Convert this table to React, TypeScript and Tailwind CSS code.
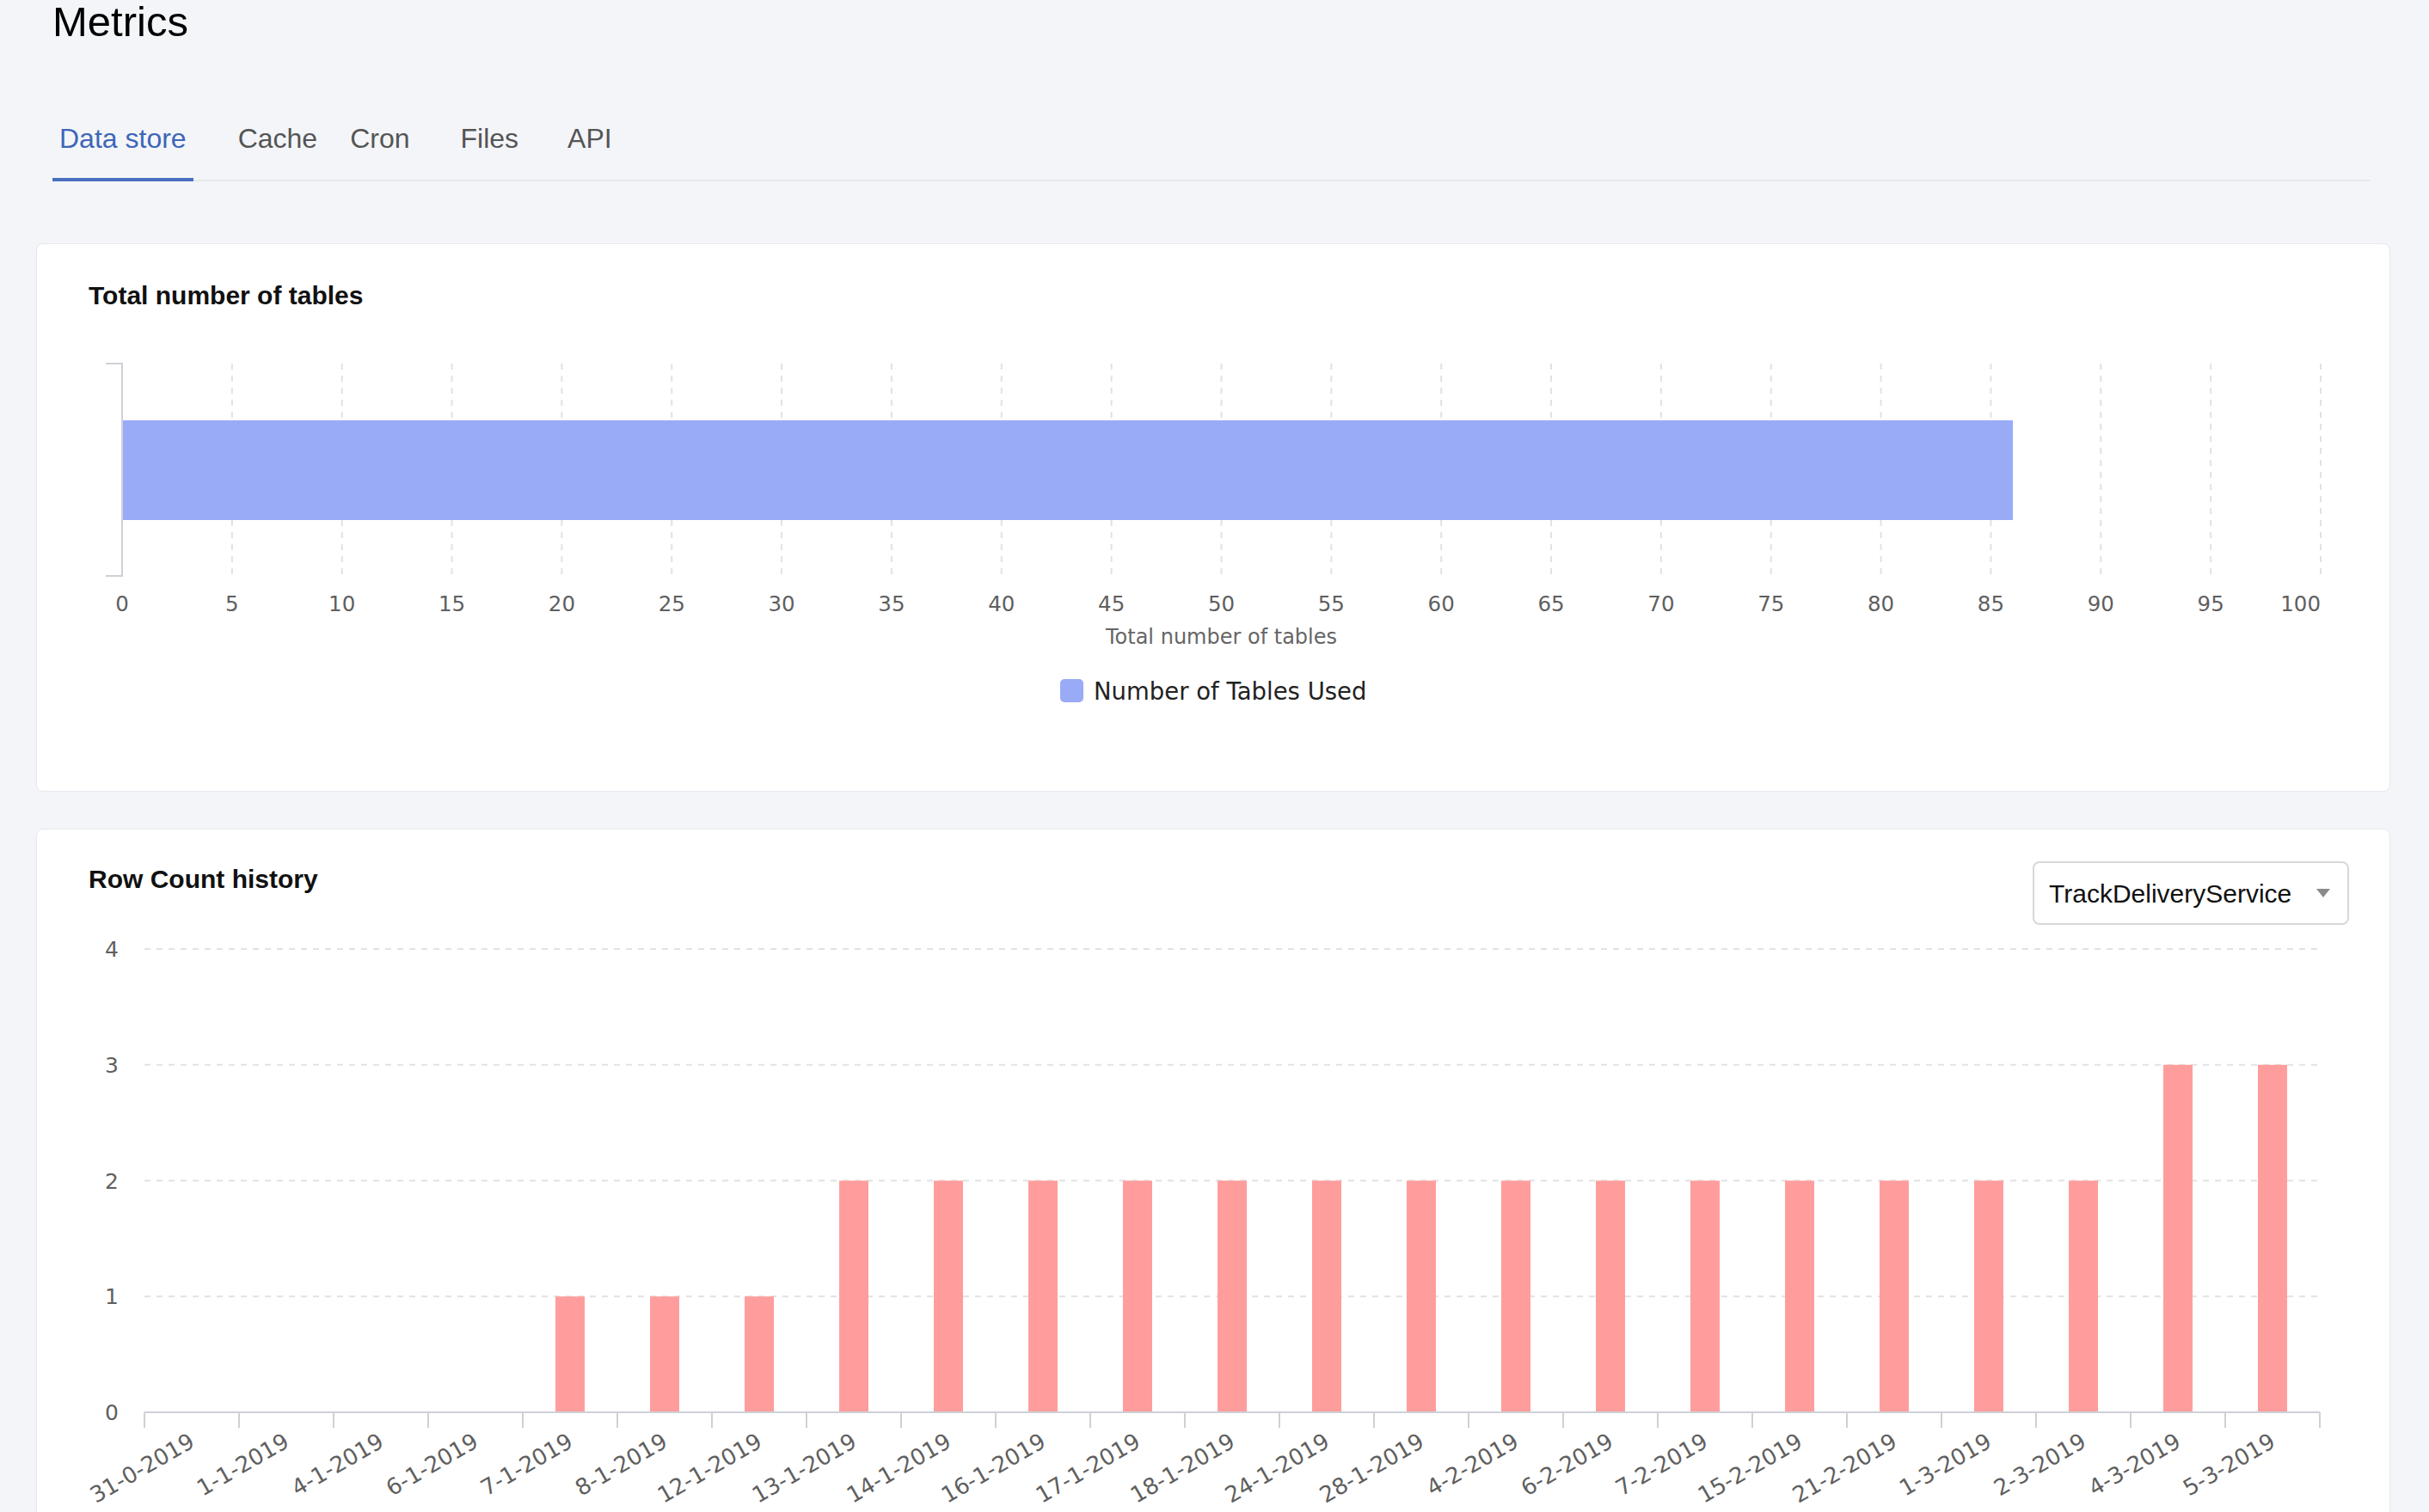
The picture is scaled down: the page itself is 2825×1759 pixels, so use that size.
import React from "react";

const tabs = [
  { label: "Data store", active: true, cls: "" },
  { label: "Cache", active: false, cls: "ml-[44px]" },
  { label: "Cron", active: false, cls: "ml-[22px]" },
  { label: "Files", active: false, cls: "ml-[43px]" },
  { label: "API", active: false, cls: "ml-[41px]" },
];

const rowCounts: [string, number][] = [
  ["31-0-2019", 0],
  ["1-1-2019", 0],
  ["4-1-2019", 0],
  ["6-1-2019", 0],
  ["7-1-2019", 1],
  ["8-1-2019", 1],
  ["12-1-2019", 1],
  ["13-1-2019", 2],
  ["14-1-2019", 2],
  ["16-1-2019", 2],
  ["17-1-2019", 2],
  ["18-1-2019", 2],
  ["24-1-2019", 2],
  ["28-1-2019", 2],
  ["4-2-2019", 2],
  ["6-2-2019", 2],
  ["7-2-2019", 2],
  ["15-2-2019", 2],
  ["21-2-2019", 2],
  ["1-3-2019", 2],
  ["2-3-2019", 2],
  ["4-3-2019", 3],
  ["5-3-2019", 3],
];

const CHART_FONT = "'DejaVu Sans', sans-serif";

const TablesChart = () => {
  const x0 = 99;
  const unit = 25.57;
  const top = 43;
  const bottom = 290;
  const ticks = Array.from({ length: 21 }, (_, i) => i * 5);

  return (
    <svg width="100%" height="540" viewBox="0 0 2736 540" className="block">
      {ticks.slice(1).map((t) => (
        <line
          key={t}
          x1={x0 + t * unit}
          x2={x0 + t * unit}
          y1={top}
          y2={bottom}
          stroke="#e2e2e2"
          strokeWidth="2"
          strokeDasharray="7 7"
        />
      ))}
      <rect x={x0} y={109} width={86 * unit} height={116} fill="#99abf7" />
      {/* y axis */}
      <path
        d={`M${x0 - 19} ${top} H${x0} V${bottom} H${x0 - 19}`}
        fill="none"
        stroke="#cdd1d6"
        strokeWidth="2"
      />
      {ticks.map((t) => (
        <text
          key={t}
          x={x0 + t * unit}
          y={331}
          textAnchor={t === 100 ? "end" : "middle"}
          fontFamily={CHART_FONT}
          fontSize="24.5"
          fill="#5f5f5f"
        >
          {t}
        </text>
      ))}
      <text
        x={x0 + 50 * unit}
        y={369}
        textAnchor="middle"
        fontFamily={CHART_FONT}
        fontSize="24"
        fill="#666"
      >
        Total number of tables
      </text>
      <rect x={1190} y={410} width={27} height={27} rx={5} fill="#99abf7" />
      <text x={1229} y={434} fontFamily={CHART_FONT} fontSize="27.5" fill="#222">
        Number of Tables Used
      </text>
    </svg>
  );
};

const RowCountChart = () => {
  const x0 = 125;
  const x1 = 2655;
  const cat = (x1 - x0) / rowCounts.length;
  const base = 567;
  const unit = 134.75;

  return (
    <svg width="100%" height="720" viewBox="0 0 2736 720" className="block">
      {[1, 2, 3, 4].map((v) => (
        <line
          key={v}
          x1={x0}
          x2={x1}
          y1={base - v * unit}
          y2={base - v * unit}
          stroke="#e2e2e2"
          strokeWidth="2"
          strokeDasharray="7 7"
        />
      ))}
      {[0, 1, 2, 3, 4].map((v) => (
        <text
          key={v}
          x={95}
          y={base - v * unit + 9}
          textAnchor="end"
          fontFamily={CHART_FONT}
          fontSize="25"
          fill="#5f5f5f"
        >
          {v}
        </text>
      ))}
      {rowCounts.map(([label, v], i) => {
        const cx = x0 + (i + 0.5) * cat;
        return (
          <g key={label}>
            {v > 0 && (
              <rect x={cx - 17} y={base - v * unit} width={34} height={v * unit} fill="#ff9d9d" />
            )}
            <text
              x={cx + 5}
              y={606}
              textAnchor="end"
              transform={`rotate(-30 ${cx + 5} 606)`}
              fontFamily={CHART_FONT}
              fontSize="26"
              fill="#5f5f5f"
            >
              {label}
            </text>
          </g>
        );
      })}
      <line x1={x0} x2={x1} y1={base} y2={base} stroke="#cdd1d6" strokeWidth="2" />
      {Array.from({ length: rowCounts.length + 1 }, (_, i) => (
        <line
          key={i}
          x1={x0 + i * cat}
          x2={x0 + i * cat}
          y1={base}
          y2={base + 18}
          stroke="#cdd1d6"
          strokeWidth="2"
        />
      ))}
    </svg>
  );
};

const App = () => {
  return (
    <div className="min-h-screen bg-[#f4f5f9] font-['Liberation_Sans',Arial,sans-serif] pb-10">
      <header className="pl-[61px] pr-[68px]">
        <h1 className="text-[49px] leading-[50px] text-black">Metrics</h1>
        <nav className="mt-[95px] flex items-end border-b-2 border-[#e6e8ec]">
          {tabs.map((tab) => (
            <div
              key={tab.label}
              className={`${tab.cls} -mb-[2px] px-[8px] pb-[30px] text-[32px] leading-[32px] border-b-4 ${
                tab.active ? "border-[#4a6fc0] text-[#3d66b8]" : "border-transparent text-[#555]"
              }`}
            >
              {tab.label}
            </div>
          ))}
        </nav>
      </header>

      <main className="mt-[72px] pl-[42px] pr-[45px] flex flex-col gap-[43px]">
        <section className="bg-white border border-[#e6e8ed] rounded-[8px]">
          <h2 className="pl-[60px] pt-[45px] text-[30px] leading-[30px] font-semibold text-[#111]">
            Total number of tables
          </h2>
          <div className="mt-[21px]">
            <TablesChart />
          </div>
        </section>

        <section className="bg-white border border-[#e6e8ed] rounded-[8px] pb-[40px]">
          <div className="flex items-start justify-between pl-[60px] pr-[47px] pt-[37px]">
            <h2 className="mt-[6px] text-[30px] leading-[30px] font-semibold text-[#111]">
              Row Count history
            </h2>
            <div className="flex h-[74px] w-[368px] items-center justify-between rounded-[8px] border-2 border-[#d8d8d8] pl-[17px] pr-[20px] text-[30px] text-[#111]">
              <span>TrackDeliveryService</span>
              <svg width="16" height="10" viewBox="0 0 16 10">
                <path d="M0 0 H16 L8 10 Z" fill="#8a8a8a" />
              </svg>
            </div>
          </div>
          <RowCountChart />
        </section>
      </main>
    </div>
  );
};

export default App;
